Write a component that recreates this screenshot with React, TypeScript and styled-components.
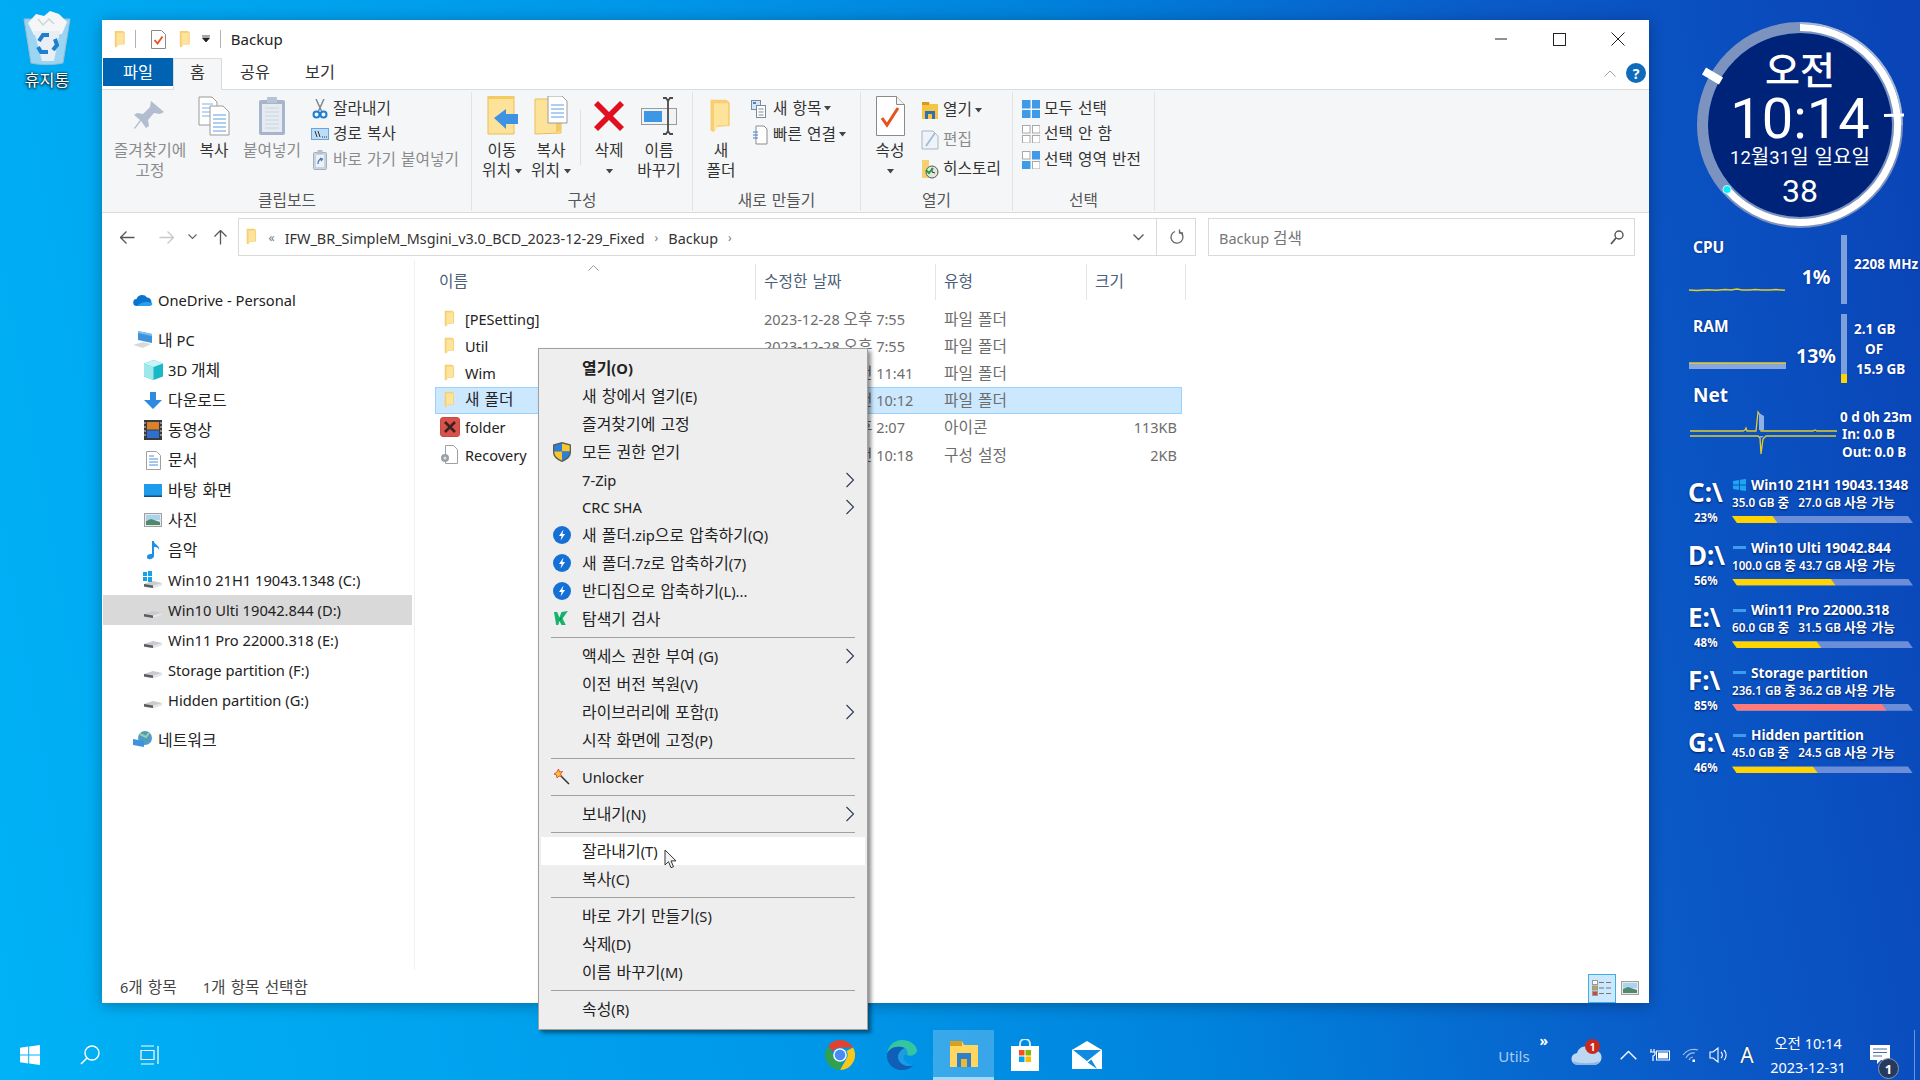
import React from "react";
import styled, { createGlobalStyle } from "styled-components";

const UI = `"Noto Sans", "Noto Sans CJK KR", sans-serif`;

const Global = createGlobalStyle`
  html, body { margin: 0; padding: 0; width: 1920px; height: 1080px; overflow: hidden; }
  * { box-sizing: border-box; }
  svg { display: block; flex: none; }
`;

/* Hangul runs are set a little larger than the Latin around them, as in the reference's UI font */
const Ko = styled.span`font-size: 1.085em; word-spacing: 1px; line-height: 1;`;
const T = ({ children }: { children: string }) => (
  <>
    {children.split(/([가-힣]+(?: [가-힣]+)*)/).map((part, i) =>
      i % 2 ? <Ko key={i}>{part}</Ko> : <React.Fragment key={i}>{part}</React.Fragment>
    )}
  </>
);

const Desktop = styled.div`
  position: relative; width: 1920px; height: 1080px; overflow: hidden;
  font-family: ${UI};
  background: linear-gradient(80deg, #00b2f6 0%, #0096e8 40%, #0082dc 58%, #0a5ac8 80%, #0a43b6 100%);
`;

/* ---------- small shared icons ---------- */
const Folder = ({ s = 1 }: { s?: number }) => (
  <svg width={16 * s} height={21 * s} viewBox="0 0 16 21">
    <path d="M2 1h9l2 1.500V16l-8 .5-1 3-2-1z" fill="#f6cf72" />
    <path d="M4 3h8v12.500H6l-1 3-1-.5z" fill="#fde39c" />
  </svg>
);
const Arrowhead = () => <svg width="7" height="5" viewBox="0 0 7 5"><path d="M0 0h7L3.500 4.500z" fill="#444" /></svg>;
const DriveGlyph = ({ win }: { win?: boolean }) => (
  <svg width="20" height="20" viewBox="0 0 20 20">
    <path d="M1 14l9-3 9 2v2l-9 3-9-1z" fill="#c9cbce" />
    <path d="M1 14l9 1.500V18l-9-1.500z" fill="#5a5c60" />
    <path d="M10 15.500l9-2.500v2l-9 3z" fill="#e4e5e6" />
    {win && <g fill="#12a3ea"><rect x="0" y="2" width="4" height="4" /><rect x="5" y="1" width="4" height="5" /><rect x="0" y="7" width="4" height="4" /><rect x="5" y="7" width="4" height="5" /></g>}
  </svg>
);
const Chev = () => <svg width="10" height="16" viewBox="0 0 10 16"><path d="M1.500 1l7 7-7 7" fill="none" stroke="#2b3a55" strokeWidth="1.100" /></svg>;
const BandiIcon = () => (
  <svg width="18" height="18" viewBox="0 0 18 18"><circle cx="9" cy="9" r="9" fill="#1570d6" /><path d="M10.500 3.500L6 10h2.600l-1 4.500L12 8H9.400z" fill="#fff" /></svg>
);
const ShieldIcon = () => (
  <svg width="18" height="20" viewBox="0 0 18 20">
    <path d="M9 0l9 2.500V10c0 5-4 8-9 10-5-2-9-5-9-10V2.500z" fill="#5c5c50" />
    <path d="M9 1.500v8H1.300V3.500z" fill="#2a7fd8" /><path d="M9 1.500l7.700 2v6H9z" fill="#f8c62e" />
    <path d="M1.300 9.500H9v9c-4-1.800-7.700-4.300-7.700-9z" fill="#f8c62e" /><path d="M9 9.500h7.700c0 4.700-3.700 7.200-7.700 9z" fill="#2a7fd8" />
  </svg>
);
const KasperskyIcon = () => (
  <svg width="15" height="15" viewBox="0 0 14 14"><path d="M0 1h3l2 5 2-5 6-1-5 7 3 6H7L5 9l-1 4H2z" fill="#13b56c" /><path d="M5 9l2-3" stroke="#0a6b40" strokeWidth=".8" /></svg>
);
const WandIcon = () => (
  <svg width="16" height="16" viewBox="0 0 16 16">
    <path d="M6 6l9 9" stroke="#333" strokeWidth="1.500" />
    <path d="M4.500 0l1 3 3-.5-2 2.500 1.500 2.500L5 7 3 9l-.5-3L0 5l2.500-1.500z" fill="#f4c430" stroke="#d8352a" strokeWidth=".8" />
  </svg>
);
const PointerIcon = () => (
  <svg width="14" height="20" viewBox="0 0 14 20"><path d="M1 1v15l3.500-3.300 2.500 6 2.500-1-2.500-5.800h5z" fill="#f2f2f2" stroke="#333" strokeWidth="1" /></svg>
);

/* ---------- desktop icon ---------- */
const BinWrap = styled.div`
  position: absolute; left: 12px; top: 9px; width: 70px;
  display: flex; flex-direction: column; align-items: center; gap: 5px;
`;
const BinLabel = styled.span`
  color: #fff; font-size: 15px; line-height: 20px; text-shadow: 0 1px 3px #000, 0 0 2px #000;
`;
const RecycleBin = () => (
  <svg width="50" height="56" viewBox="0 0 50 56">
    <path d="M2 10l7 44c8 2 24 2 32 0l7-44z" fill="#cfe3f2" fillOpacity=".75" stroke="#9fb9cc" />
    <path d="M6 14l8-9 8 2 6-5 9 3 8 8-5 12-28 1z" fill="#f4f6f8" />
    <path d="M12 22l8 30h12l6-30z" fill="#e8eef3" />
    <path d="M16 10l5 6 6-6 5 5" fill="none" stroke="#cdd4da" strokeWidth="1.500" />
    <g fill="none" stroke="#1d7fd0" strokeWidth="4">
      <path d="M17 32l4-6h6" /><path d="M33 30l2 6-4 5" /><path d="M26 43h-7l-3-5" />
    </g>
  </svg>
);

/* ---------- window ---------- */
const Win = styled.div`
  position: absolute; left: 102px; top: 20px; width: 1547px; height: 983px;
  background: #fff; display: flex; flex-direction: column;
  box-shadow: 0 2px 14px rgba(0, 0, 0, .3); color: #1e1e1e; font-size: 15px;
`;
const TitleBar = styled.div`
  height: 38px; display: flex; align-items: center; padding-left: 11px; flex: none;
`;
const TitleSep = styled.div<{ $m?: number }>`
  width: 1px; height: 18px; background: #b4b4b4; margin: 0 ${p => p.$m ?? 8}px;
`;
const TitleGap = styled.div<{ $w: number }>`width: ${p => p.$w}px; flex: none;`;
const TitleText = styled.span`font-size: 15px; color: #222;`;
const WinButtons = styled.div`margin-left: auto; display: flex; align-items: center; padding-right: 2px;`;
const WinBtn = styled.div`width: 58.5px; display: flex; justify-content: center;`;

const TabRow = styled.div`
  height: 32px; flex: none; display: flex; align-items: flex-start; padding-left: 1px;
  border-bottom: 1px solid #dadbdc; position: relative;
`;
const FileTab = styled.div`
  width: 70px; background: #0063b1; color: #fff; display: flex; align-items: center; justify-content: center;
  font-size: 15px; height: 28px;
`;
const Tab = styled.div<{ $active?: boolean; $w: number }>`
  width: ${p => p.$w}px; height: 28px; display: flex; align-items: center; justify-content: center; font-size: 15px; color: #333;
  ${p => p.$active ? `background:#f5f6f7;border:1px solid #dadbdc;border-bottom:none;height:32px;padding-bottom:4px;` : ""}
`;
const RibbonHelp = styled.div`margin-left: auto; display: flex; align-items: center; gap: 10px; padding-right: 3px; height: 30px;`;
const HelpDot = styled.div`
  width: 20px; height: 20px; border-radius: 50%; background: #0f6cbd; color: #fff; font-size: 14px; font-weight: 700;
  display: flex; align-items: center; justify-content: center;
`;

const Ribbon = styled.div`
  height: 123px; flex: none; background: #f5f6f7; border-bottom: 1px solid #dadbdc; display: flex; padding-left: 1px;
`;
const Group = styled.div<{ $w: number }>`
  width: ${p => p.$w}px; height: 119px; margin-top: 2px; border-right: 1px solid #e2e3e4; display: flex; flex-direction: column; flex: none;
`;
const GroupBody = styled.div<{ $pl: number }>`
  flex: 1; display: flex; padding-left: ${p => p.$pl}px; align-items: flex-start; min-height: 0;
`;
const GroupLabel = styled.div`
  height: 20px; margin-bottom: 1px; line-height: 20px; text-align: center; font-size: 14.500px; color: #555; flex: none;
`;
const LargeBtn = styled.div<{ $w: number; $dim?: boolean }>`
  width: ${p => p.$w}px; flex: none; display: flex; flex-direction: column; align-items: center;
  color: ${p => p.$dim ? "#8b8b8b" : "#333"}; font-size: 14.500px; line-height: 20px; padding-top: 4px;
`;
const LargeIcon = styled.div`height: 40px; display: flex; align-items: center; justify-content: center; margin-bottom: 5px;`;
const Line = styled.div`display: flex; align-items: center; gap: 4px; height: 20px; white-space: nowrap;`;
const VSep = styled.div`width: 1px; height: 55px; background: #dfe0e1; margin: 18px 5px 0;`;
const SmallCol = styled.div<{ $ml: number; $gap: number; $pt: number }>`
  margin-left: ${p => p.$ml}px; display: flex; flex-direction: column; gap: ${p => p.$gap}px; padding-top: ${p => p.$pt}px;
`;
const SmallBtn = styled.div<{ $dim?: boolean }>`
  display: flex; align-items: center; gap: 3px; height: 20px; font-size: 14.500px; white-space: nowrap;
  color: ${p => p.$dim ? "#8b8b8b" : "#333"};
`;
const SmallIco = styled.div`width: 20px; height: 20px; display: flex; align-items: center; justify-content: center; flex: none;`;

const AddressRow = styled.div`
  height: 47px; flex: none; display: flex; align-items: center; padding-top: 1px;
`;
const NavBtns = styled.div`width: 136px; display: flex; align-items: center; flex: none; padding-left: 18px;`;
const NavBtn = styled.div<{ $w: number }>`width: ${p => p.$w}px; display: flex; justify-content: flex-start;`;
const AddressBox = styled.div`
  width: 958px; height: 38px; border: 1px solid #d9d9d9; display: flex; align-items: center; padding-left: 6px; font-size: 14.400px; color: #333; flex: none;
`;
const Crumb = styled.span`margin: 2px 0 0 10px; white-space: nowrap;`;
const CrumbSep = styled.span`color: #777; font-size: 12px; margin-left: 10px;`;
const AddrRight = styled.div`margin-left: auto; display: flex; align-items: center; height: 100%;`;
const ComboArrow = styled.div`margin-right: 12px;`;
const RefreshBox = styled.div`
  width: 39px; height: 100%; border-left: 1px solid #d9d9d9; display: flex; align-items: center; justify-content: center;
`;
const SearchBox = styled.div`
  margin-left: 12px; width: 427px; height: 38px; border: 1px solid #d9d9d9; display: flex; align-items: center; justify-content: space-between;
  padding: 0 10px; font-size: 14.500px; color: #777;
`;
const SearchText = styled.span`margin-top: 1px;`;

const Main = styled.div`flex: 1; min-height: 0; display: flex;`;
const NavPane = styled.div`
  width: 313px; flex: none; padding: 25px 0 0 1px; border-right: 1px solid #f0f0f0;
`;
const NavRow = styled.div<{ $sub?: boolean; $sel?: boolean; $mt?: number }>`
  height: 30px; width: 309px; display: flex; align-items: center; gap: 5px; white-space: nowrap;
  padding-left: ${p => p.$sub ? 40 : 30}px; margin-top: ${p => p.$mt ?? 0}px;
  background: ${p => p.$sel ? "#d9d9d9" : "transparent"}; font-size: 14.700px; color: #222;
`;
const NavText = styled.span`display: block;`;
const FileArea = styled.div`flex: 1; min-width: 0; display: flex; flex-direction: column;`;
const HeaderRow = styled.div`
  display: grid; grid-template-columns: 341px 180px 151px 99px; height: 45px; flex: none;
`;
const HeaderCell = styled.div<{ $pl?: number }>`
  position: relative; border-right: 1px solid #e5e5e5; height: 36px; display: flex; align-items: center; margin-top: 4px; padding-top: 1px; padding-bottom: 1px;
  padding-left: ${p => p.$pl ?? 8}px; font-size: 14.500px; color: #4c607a;
`;
const SortCaret = styled.div`position: absolute; left: 173px; top: 1px;`;
const Rows = styled.div`display: flex; flex-direction: column; padding-left: 20px;`;
const FileRow = styled.div<{ $sel?: boolean }>`
  width: 747px; height: 27.200px; display: grid; grid-template-columns: 321px 180px 151px 95px; align-items: center;
  font-size: 14.500px; color: #6d6d6d;
  ${p => p.$sel ? "background:#cce8ff;box-shadow:inset 0 0 0 1px #99d1ff;" : ""}
`;
const NameCell = styled.div`display: flex; align-items: center; color: #222; padding-left: 8px; white-space: nowrap;`;
const NameIco = styled.div<{ $wide?: boolean }>`
  width: 22px; display: flex; justify-content: flex-start; flex: none;
  margin-left: ${p => p.$wide ? -3 : 0}px; margin-right: ${p => p.$wide ? 3 : 0}px;
`;
const Cell = styled.div<{ $right?: boolean }>`
  padding: 0 ${p => p.$right ? "5px" : "0"} 0 8px; text-align: ${p => p.$right ? "right" : "left"}; white-space: nowrap;
`;
const StatusBar = styled.div`
  height: 33px; flex: none; display: flex; align-items: center; padding-left: 18px; font-size: 14.500px; color: #444;
`;
const StatusGap = styled.span`margin-left: 26px;`;
const ViewBtns = styled.div`margin-left: auto; display: flex; align-items: center; padding-right: 5px;`;
const ViewBtn = styled.div<{ $on?: boolean }>`
  width: 28px; height: 29px; display: flex; align-items: center; justify-content: center; margin-top: 3px;
  ${p => p.$on ? "background:#cce8ff;border:1px solid #3daee9;" : ""}
`;

/* ---------- context menu ---------- */
const Menu = styled.div`
  position: absolute; left: 538px; top: 348px; width: 330px; height: 682px; background: #eeeeee;
  border: 1px solid #a0a0a0; padding: 5px 2px 6px; box-shadow: 3px 3px 4px rgba(0, 0, 0, .45);
  font-size: 14.700px; color: #222;
`;
const MenuItem = styled.div<{ $hot?: boolean; $bold?: boolean }>`
  height: 27.900px; display: flex; align-items: center; white-space: nowrap; padding-right: 10px; position: relative;
  background: ${p => p.$hot ? "#fff" : "transparent"}; font-weight: ${p => p.$bold ? 700 : 400};
`;
const MenuIcon = styled.div`width: 41px; display: flex; justify-content: center; flex: none;`;
const MenuLabel = styled.span`display: block;`;
const MenuArrow = styled.div`margin-left: auto;`;
const MenuSep = styled.div`height: 9.300px; display: flex; align-items: center; padding: 0 10px;
  &::after { content: ""; flex: 1; height: 1px; background: #a0a0a0; }
`;
const Pointer = styled.div`position: absolute; left: 664px; top: 849px;`;

/* ---------- taskbar ---------- */
const Taskbar = styled.div`
  position: absolute; left: 0; right: 0; bottom: 0; height: 50px; display: flex; align-items: stretch; color: #fff;
`;
const TaskCell = styled.div<{ $w: number; $ml?: number; $on?: boolean }>`
  width: ${p => p.$w}px; margin-left: ${p => p.$ml ?? 0}px; display: flex; align-items: center; justify-content: center; flex: none; position: relative;
  ${p => p.$on ? `background: rgba(255,255,255,.22); border-bottom: 3px solid rgba(255,255,255,.55);` : ""}
`;
const Tray = styled.div`margin-left: auto; display: flex; align-items: stretch;`;
const TrayCell = styled.div<{ $w: number; $pr?: number }>`
  width: ${p => p.$w}px; flex: none; display: flex; align-items: center; justify-content: center; position: relative;
  padding-right: ${p => p.$pr ?? 0}px;
`;
const UtilsText = styled.span`font-size: 15px; color: #a8cdf0; margin-top: 2px;`;
const More = styled.span`position: absolute; right: 13px; top: 1px; font-size: 14px; font-weight: 700;`;
const CloudBadge = styled.div`
  position: absolute; left: 24px; top: 9px; width: 15px; height: 15px; border-radius: 50%; background: #c8281e; color: #fff;
  font-size: 10px; font-weight: 700; display: flex; align-items: center; justify-content: center;
`;
const ImeA = styled.span`font-size: 21px; color: #fff; text-shadow: 0 0 1px #000;`;
const Clock = styled.div`
  display: flex; flex-direction: column; align-items: center; font-size: 14.500px; line-height: 24px; color: #fff; white-space: nowrap;
`;
const NotifBadge = styled.div`
  position: absolute; left: 23px; top: 28px; width: 21px; height: 21px; border-radius: 50%; background: #263a5e; border: 1px solid #8b9ab4;
  color: #fff; font-size: 13px; font-weight: 700; display: flex; align-items: center; justify-content: center;
`;
const TrayEdge = styled.div`width: 1px; background: rgba(255,255,255,.4); margin: 0 5px 0 0;`;

/* ---------- clock widget ---------- */
const ClockFace = styled.div`
  position: absolute; left: 1692px; top: 17px; width: 216px; height: 216px; color: #fff;
  display: flex; flex-direction: column; align-items: center;
`;
const ClockRing = styled.svg`position: absolute; inset: 0;`;
const ClockText = styled.div<{ $size: number; $h: number; $w?: number; $mt?: number }>`
  position: relative; font-family: Roboto, "Noto Sans CJK KR", sans-serif; font-size: ${p => p.$size}px; font-weight: ${p => p.$w ?? 400};
  line-height: ${p => p.$h}px; height: ${p => p.$h}px; margin-top: ${p => p.$mt ?? 0}px; white-space: nowrap;
`;

/* ---------- meters ---------- */
const Meters = styled.div`
  position: absolute; left: 1689px; top: 235px; width: 231px; color: #fff; display: flex; flex-direction: column;
  font-family: ${UI}; text-shadow: 0 0 2px rgba(0, 30, 110, .8);
`;
const MeterRow = styled.div<{ $mt?: number }>`
  height: 69px; display: flex; margin-top: ${p => p.$mt ?? 0}px;
`;
const MeterLeft = styled.div`width: 108px; flex: none; position: relative; display: flex; flex-direction: column; justify-content: space-between; padding-bottom: 9px;`;
const MeterName = styled.div`font-size: 15.500px; font-weight: 700; padding-left: 4px; line-height: 24px;`;
const MeterPct = styled.div`width: 44px; flex: none; text-align: center; padding: 13px 6px 0 0; font-size: 19.500px; font-weight: 700; display: flex; align-items: center; justify-content: center; white-space: nowrap;`;
const MeterBar = styled.div`width: 6px; flex: none; background: #7d9fdc; position: relative; display: flex; align-items: flex-end;`;
const MeterBarFill = styled.div`width: 100%; background: #ffd400;`;
const MeterInfo = styled.div`margin-left: 7px; font-size: 13.500px; font-weight: 700; display: flex; flex-direction: column; justify-content: center; white-space: nowrap;`;
const MeterLine = styled.div<{ $pl?: number; $h?: number }>`padding-left: ${p => p.$pl ?? 0}px; line-height: ${p => p.$h ?? 20}px; min-height: ${p => p.$h ?? 20}px;`;
const NetName = styled.div`font-size: 19px; font-weight: 700; line-height: 26px; padding-left: 4px; margin-top: -1px;`;
const NetBody = styled.div`display: flex;`;
const NetInfo = styled.div`margin-left: 2px; font-size: 13.500px; font-weight: 700; display: flex; flex-direction: column; white-space: nowrap;`;

const Drives = styled.div`
  position: absolute; left: 1688px; top: 477px; width: 226px; color: #fff; display: flex; flex-direction: column;
  text-shadow: 0 1px 2px rgba(0, 20, 80, .9);
`;
const Drive = styled.div`height: 62.600px; display: grid; grid-template-columns: 44px 181px; align-items: start;`;
const DriveLetterCol = styled.div`display: flex; flex-direction: column; align-items: flex-start;`;
const DriveLetter = styled.div`font-size: 26px; font-weight: 700; line-height: 30px; white-space: nowrap;`;
const DrivePct = styled.div`font-size: 11.500px; font-weight: 700; line-height: 16px; margin: 3px 0 0 6px;`;
const DriveTitle = styled.div`display: flex; align-items: center; height: 14px; margin-top: 1px; font-size: 13.700px; font-weight: 700; white-space: nowrap; line-height: 14px;`;
const DriveGlyphSlot = styled.div`width: 19px; flex: none; display: flex; align-items: center; padding-left: 1px;`;
const Dash = styled.div`width: 13px; height: 3px; background: #3d9cf0;`;
const DriveSub = styled.div`font-size: 11.700px; font-weight: 600; line-height: 18px; margin-top: 1px; white-space: pre;`;
const Track = styled.div`
  height: 7px; margin-top: 5px; position: relative; background: #6c8ed8; clip-path: polygon(0 0, calc(100% - 5px) 0, 100% 100%, 5px 100%);
`;
const Fill = styled.div<{ $c: string }>`
  position: absolute; left: 0; top: 0; bottom: 0; background: ${p => p.$c}; clip-path: polygon(0 0, calc(100% - 5px) 0, 100% 100%, 0 100%);
`;

/* ---------- ribbon icons ---------- */
const PinIco = () => (
  <svg width="32" height="34" viewBox="0 0 32 34"><path d="M17 2l13 11-4 2-6-1-6 7 1 6-3 2-5-7-6 8-1-1 6-8-6-5 3-2 6 1 7-7z" fill="#b2bed0" /></svg>
);
const PagesIco = () => (
  <svg width="32" height="40" viewBox="0 0 32 40">
    <path d="M1 1h13l5 5v23H1z" fill="#fff" stroke="#9a9a9a" />
    <path d="M4 8h11M4 12h11M4 16h11M4 20h11" stroke="#7fb2e5" />
    <path d="M12 10h13l6 6v23H12z" fill="#fff" stroke="#9a9a9a" />
    <path d="M15 19h13M15 23h13M15 27h13M15 31h13M15 35h13" stroke="#5b9fe4" strokeWidth="1.200" />
  </svg>
);
const ClipIco = () => (
  <svg width="28" height="40" viewBox="0 0 28 40">
    <rect x="1" y="4" width="26" height="35" rx="2" fill="#a6b5cc" /><rect x="4" y="8" width="20" height="28" fill="#e6ebf2" />
    <path d="M7 12h14M7 16h14M7 20h14M7 24h14M7 28h14M7 32h14" stroke="#cbd4e0" />
    <rect x="9" y="1" width="10" height="6" rx="1" fill="#b7c3d6" />
  </svg>
);
const ScissorsIco = () => (
  <svg width="16" height="20" viewBox="0 0 16 20">
    <path d="M4 0l5.500 12M12 0L6.500 12" stroke="#7d8792" strokeWidth="1.500" />
    <circle cx="4.500" cy="15.500" r="3" fill="none" stroke="#1e7fd2" strokeWidth="2" /><circle cx="11.500" cy="15.500" r="3" fill="none" stroke="#1e7fd2" strokeWidth="2" />
  </svg>
);
const PathIco = () => (
  <svg width="18" height="14" viewBox="0 0 18 14"><rect x=".5" y="1.500" width="17" height="11" fill="#bcdcf7" stroke="#6aa5dc" /><path d="M4 4l2 6M7 4l2 6" stroke="#333" /><path d="M11 10h1M13 10h1M15 10h1" stroke="#333" /></svg>
);
const ShortcutIco = () => (
  <svg width="14" height="20" viewBox="0 0 14 20"><rect x=".5" y="2.500" width="13" height="17" rx="1" fill="#c9d3e0" stroke="#a3afbf" /><rect x="3" y="5" width="8" height="12" fill="#eef1f5" /><path d="M5 14c0-3 1-5 4-5M7 8l2.500 1L8 11" fill="none" stroke="#4a7fb8" strokeWidth="1.300" /><rect x="4.500" y="0" width="5" height="4" fill="#b3bfcf" /></svg>
);
const MoveToIco = () => (
  <svg width="36" height="40" viewBox="0 0 36 40">
    <path d="M4 0h26v38H4z" fill="#fde39a" stroke="#e8bf57" />
    <path d="M4 0h26v3H4z" fill="#f4ca63" />
    <path d="M10 22l12-9v5h12v10H22v5z" fill="#3e92e4" />
  </svg>
);
const CopyToIco = () => (
  <svg width="34" height="40" viewBox="0 0 34 40">
    <path d="M1 3h26v34l-26 1z" fill="#fde39a" stroke="#e8bf57" />
    <path d="M22 14v22c2 1 4-1 5-3V12z" fill="#f4ca63" />
    <path d="M14 0h14l5 5v22H14z" fill="#fff" stroke="#9a9a9a" /><path d="M17 9h13M17 13h13M17 17h13M17 21h13" stroke="#5b9fe4" />
  </svg>
);
const DelIco = () => (
  <svg width="32" height="32" viewBox="0 0 32 32"><path d="M5 1l11 11L27 1l4 4-11 11 11 11-4 4-11-11L5 31l-4-4 11-11L1 5z" fill="#e01020" /></svg>
);
const RenameIco = () => (
  <svg width="36" height="38" viewBox="0 0 36 38">
    <rect x=".5" y="11.500" width="35" height="16" fill="#f0f2f4" stroke="#9a9a9a" /><rect x="3" y="14" width="18" height="11" fill="#3c98e6" />
    <path d="M22 1h3l2 3 2-3h3M27 4v30M22 37h3l2-3 2 3h3" fill="none" stroke="#4a4a4a" strokeWidth="1.800" />
  </svg>
);
const NewItemIco = () => (
  <svg width="18" height="18" viewBox="0 0 18 18"><rect x=".5" y=".5" width="9" height="9" fill="#d7e6f5" stroke="#7a8a99" /><path d="M2 3h3" stroke="#3a8ad8" strokeWidth="2" /><rect x="5.500" y="5.500" width="9" height="12" fill="#fff" stroke="#7a8a99" /><path d="M7.500 9h5M7.500 12h5M7.500 15h5" stroke="#7a8a99" /></svg>
);
const EasyIco = () => (
  <svg width="16" height="20" viewBox="0 0 16 20"><path d="M4 1h8l3 3v15H4z" fill="#fff" stroke="#8b8b8b" /><path d="M1 7h5M1 10h5M1 13h5" stroke="#3a7ed0" strokeWidth="1.200" /></svg>
);
const PropIco = () => (
  <svg width="29" height="40" viewBox="0 0 29 40"><path d="M.5 .5h20l8 8v31H.5z" fill="#fff" stroke="#8a8a8a" /><path d="M20.500 .5v8h8" fill="#f2f2f2" stroke="#8a8a8a" /><path d="M6 22l5 7L22 12" fill="none" stroke="#e8501c" strokeWidth="3" /></svg>
);
const OpenIco = () => (
  <svg width="18" height="20" viewBox="0 0 18 20"><path d="M1 2h7l1 2h8v15H1z" fill="#f6c640" /><path d="M1 2h7v3H1z" fill="#d69a20" /><path d="M4 11h10v8h-3v-5H7v5H4z" fill="#2f6fb5" /></svg>
);
const EditIco = () => (
  <svg width="18" height="20" viewBox="0 0 18 20"><path d="M1 1h11l5 5v13H1z" fill="#eef3f9" stroke="#a9b6c6" /><path d="M5 16L14 3" stroke="#a9bdd6" strokeWidth="2" /></svg>
);
const HistIco = () => (
  <svg width="18" height="20" viewBox="0 0 18 20"><path d="M1 1h7v18H1z" fill="#f6cf72" /><circle cx="11" cy="13" r="6" fill="#dfe7df" stroke="#555" /><path d="M11 9v4l3 1" fill="none" stroke="#333" /><path d="M5 11l3 3 4-5" fill="none" stroke="#21a03a" strokeWidth="2" /></svg>
);
const GridIco = ({ fill }: { fill: boolean[] }) => (
  <svg width="18" height="18" viewBox="0 0 18 18">
    {[[0, 0], [10, 0], [0, 10], [10, 10]].map(([x, y], i) => (
      <rect key={i} x={x + .5} y={y + .5} width="7.500" height="7.500" fill={fill[i] ? "#3f9be8" : "#fff"} stroke={fill[i] ? "#3f9be8" : "#a9a9a9"} />
    ))}
  </svg>
);

/* ---------- nav icons ---------- */
const PicIco = () => <svg width="18" height="14" viewBox="0 0 18 14"><rect x=".5" y=".5" width="17" height="13" fill="#e8e8e8" stroke="#a0a0a0" /><rect x="2" y="2" width="14" height="5" fill="#a9d3ee" /><path d="M2 8l5-2 9 3v3H2z" fill="#4f8a70" /></svg>;
const Nav = {
  cloud: <svg width="20" height="14" viewBox="0 0 20 14"><path d="M4 13a3.500 3.500 0 0 1-.5-7A6 6 0 0 1 14 4.500 4.500 4.500 0 0 1 16 13z" fill="#0a74d0" /><path d="M4 13c4-4 9-5 15-3 1 2-1 3-3 3z" fill="#29a0ec" /></svg>,
  pc: <svg width="20" height="18" viewBox="0 0 20 18"><path d="M5 0l14 3v9L5 9z" fill="#3f93dd" /><path d="M5 0l14 3v2L5 2z" fill="#7cc0f0" /><path d="M0 14l10-3 8 2-8 4z" fill="#d8d9da" /></svg>,
  cube: <svg width="19" height="20" viewBox="0 0 19 20"><path d="M9.500 0L19 3.500v13L9.500 20 0 16.500v-13z" fill="#19b8c8" /><path d="M0 3.500L9.500 7v13L0 16.500z" fill="#9ee8ec" /><path d="M9.500 0L19 3.500 9.500 7 0 3.500z" fill="#c8f4f4" /></svg>,
  down: <svg width="18" height="17" viewBox="0 0 18 17"><path d="M6 0h6v8h6l-9 9-9-9h6z" fill="#2f8be0" /></svg>,
  video: <svg width="18" height="20" viewBox="0 0 18 20"><rect width="18" height="20" fill="#3a3a3a" /><rect x="3" y="2" width="12" height="7.500" fill="#d9812c" /><rect x="3" y="10.500" width="12" height="7.500" fill="#2f6fd0" /><path d="M1 2v16M17 2v16" stroke="#ddd" strokeDasharray="2 2" /></svg>,
  doc: <svg width="15" height="19" viewBox="0 0 15 19"><path d="M.5 .5h10l4 4v14H.5z" fill="#fff" stroke="#a0a0a0" /><path d="M3 5h5M3 8h9M3 11h9M3 14h9" stroke="#4a93dc" /></svg>,
  desk: <svg width="18" height="13" viewBox="0 0 18 13"><rect width="18" height="13" fill="#1f9bec" /><rect y="11.500" width="18" height="1.500" fill="#134e86" /></svg>,
  pic: <PicIco />,
  music: <svg width="13" height="19" viewBox="0 0 13 19"><path d="M5 0h2c0 4 6 4 5 9-1-3-3-3-5-3v9c0 3-7 5-7 1 0-3 3-3 5-3z" fill="#1f8fe6" /></svg>,
  net: <svg width="20" height="18" viewBox="0 0 20 18"><circle cx="12" cy="7" r="7" fill="#4f9cc8" /><path d="M7 3l6 3 3-4" stroke="#9fd28a" fill="none" strokeWidth="2" /><path d="M0 8l11 2v6L0 14z" fill="#3f93dd" /></svg>,
};
const ErrIco = () => <svg width="20" height="20" viewBox="0 0 20 20"><rect x=".5" y=".5" width="19" height="19" rx="2.500" fill="#d9514a" stroke="#c84a42" /><path d="M5 5l10 10M15 5L5 15" stroke="#3a2220" strokeWidth="2.600" /></svg>;
const IniIco = () => <svg width="18" height="19" viewBox="0 0 18 19"><path d="M5.500 .5h8l4 4v14h-12z" fill="#fff" stroke="#a0a0a0" /><circle cx="5" cy="13" r="4" fill="#9ba0a5" /><circle cx="5" cy="13" r="1.500" fill="#e0e0e0" /></svg>;

/* ---------- taskbar icons ---------- */
const ChromeIco = () => (
  <svg width="30" height="30" viewBox="0 0 30 30">
    <path d="M15 0a15 15 0 0 1 13 7.500H15a7.500 7.500 0 0 0-6.800 4.300L3.200 6A15 15 0 0 1 15 0z" fill="#e3402f" />
    <path d="M28 7.500A15 15 0 0 1 15 30l6.500-11.200A7.500 7.500 0 0 0 21.500 11z" fill="#f9c818" />
    <path d="M15 30A15 15 0 0 1 3.200 6l6.300 11a7.500 7.500 0 0 0 8 3.800z" fill="#2fa14f" />
    <circle cx="15" cy="15" r="6.800" fill="#fff" /><circle cx="15" cy="15" r="5.400" fill="#4a8af4" />
  </svg>
);
const EdgeIco = () => (
  <svg width="30" height="30" viewBox="0 0 30 30">
    <path d="M15 0C7 0 1 6 0 14c3-6 9-8 14-7 5 1 7 4 6 8 5 2 10-1 10-5C29 4 22 0 15 0z" fill="#34c6a0" />
    <path d="M0 14c-1 9 6 16 15 16 5 0 9-2 12-5-5 2-12 1-15-4-3-5 0-10 6-13C10 5 2 8 0 14z" fill="#0f5fb8" />
    <path d="M18 8c-5 2-8 7-6 12 2 5 9 7 15 5-3 0-7-1-9-4-2-3-2-7 2-6 1-3 0-6-2-7z" fill="#1d9de0" />
  </svg>
);
const ExplorerIco = () => (
  <svg width="28" height="26" viewBox="0 0 28 26"><path d="M0 0h12l2 4h14v22H0z" fill="#ffd660" /><path d="M0 0h12v5H0z" fill="#d9a020" /><path d="M7 12h14v14h-4v-8h-6v8H7z" fill="#2f80c8" /><rect x="11" y="18" width="6" height="8" fill="#e9b93a" /></svg>
);
const StoreIco = () => (
  <svg width="28" height="32" viewBox="0 0 28 32"><path d="M9 7V5a5 5 0 0 1 10 0v2" fill="none" stroke="#cfe8fa" strokeWidth="2" /><rect y="7" width="28" height="25" fill="#fff" /><rect x="8" y="11" width="5.500" height="5.500" fill="#f25022" /><rect x="14.500" y="11" width="5.500" height="5.500" fill="#7fba00" /><rect x="8" y="17.500" width="5.500" height="5.500" fill="#00a4ef" /><rect x="14.500" y="17.500" width="5.500" height="5.500" fill="#ffb900" /></svg>
);
const MailIco = () => (
  <svg width="30" height="28" viewBox="0 0 30 28"><path d="M15 0l15 9v19H0V9z" fill="#fff" /><path d="M0 9h30L19 18l6 10-10-7-15-12z" fill="#0f8be4" /><path d="M0 9l15 12 15-12" fill="none" stroke="#fff" strokeWidth="1.500" /></svg>
);

const menuGroups: { t: string; icon?: React.ReactNode; arrow?: boolean; bold?: boolean; hot?: boolean }[][] = [
  [
    { t: "열기(O)", bold: true }, { t: "새 창에서 열기(E)" }, { t: "즐겨찾기에 고정" },
    { t: "모든 권한 얻기", icon: <ShieldIcon /> }, { t: "7-Zip", arrow: true }, { t: "CRC SHA", arrow: true },
    { t: "새 폴더.zip으로 압축하기(Q)", icon: <BandiIcon /> }, { t: "새 폴더.7z로 압축하기(7)", icon: <BandiIcon /> },
    { t: "반디집으로 압축하기(L)...", icon: <BandiIcon /> }, { t: "탐색기 검사", icon: <KasperskyIcon /> },
  ],
  [{ t: "액세스 권한 부여 (G)", arrow: true }, { t: "이전 버전 복원(V)" }, { t: "라이브러리에 포함(I)", arrow: true }, { t: "시작 화면에 고정(P)" }],
  [{ t: "Unlocker", icon: <WandIcon /> }],
  [{ t: "보내기(N)", arrow: true }],
  [{ t: "잘라내기(T)", hot: true }, { t: "복사(C)" }],
  [{ t: "바로 가기 만들기(S)" }, { t: "삭제(D)" }, { t: "이름 바꾸기(M)" }],
  [{ t: "속성(R)" }],
];

const navItems: { t: string; i: React.ReactNode; sub?: boolean; sel?: boolean; mt?: number }[] = [
  { t: "OneDrive - Personal", i: Nav.cloud },
  { t: "내 PC", i: Nav.pc, mt: 10 },
  { t: "3D 개체", i: Nav.cube, sub: true },
  { t: "다운로드", i: Nav.down, sub: true },
  { t: "동영상", i: Nav.video, sub: true },
  { t: "문서", i: Nav.doc, sub: true },
  { t: "바탕 화면", i: Nav.desk, sub: true },
  { t: "사진", i: Nav.pic, sub: true },
  { t: "음악", i: Nav.music, sub: true },
  { t: "Win10 21H1 19043.1348 (C:)", i: <DriveGlyph win />, sub: true },
  { t: "Win10 Ulti 19042.844 (D:)", i: <DriveGlyph />, sub: true, sel: true },
  { t: "Win11 Pro 22000.318 (E:)", i: <DriveGlyph />, sub: true },
  { t: "Storage partition (F:)", i: <DriveGlyph />, sub: true },
  { t: "Hidden partition (G:)", i: <DriveGlyph />, sub: true },
  { t: "네트워크", i: Nav.net, mt: 10 },
];
const NavIcoSlot = styled.div`width: 20px; height: 20px; display: flex; align-items: center; justify-content: center; flex: none;`;

const files: { n: string; i: React.ReactNode; wide?: boolean; d: string; ty: string; sz?: string; sel?: boolean }[] = [
  { n: "[PESetting]", i: <Folder s={0.85} />, d: "2023-12-28 오후 7:55", ty: "파일 폴더" },
  { n: "Util", i: <Folder s={0.85} />, d: "2023-12-28 오후 7:55", ty: "파일 폴더" },
  { n: "Wim", i: <Folder s={0.85} />, d: "2023-12-29 오전 11:41", ty: "파일 폴더" },
  { n: "새 폴더", i: <Folder s={0.85} />, d: "2023-12-31 오전 10:12", ty: "파일 폴더", sel: true },
  { n: "folder", i: <ErrIco />, wide: true, d: "2023-12-28 오후 2:07", ty: "아이콘", sz: "113KB" },
  { n: "Recovery", i: <IniIco />, wide: true, d: "2023-12-29 오전 10:18", ty: "구성 설정", sz: "2KB" },
];

const drives = [
  { l: "C:\\", p: 23, t: "Win10 21H1 19043.1348", s: "35.0 GB 중   27.0 GB 사용 가능", win: true },
  { l: "D:\\", p: 56, t: "Win10 Ulti 19042.844", s: "100.0 GB 중 43.7 GB 사용 가능" },
  { l: "E:\\", p: 48, t: "Win11 Pro 22000.318", s: "60.0 GB 중   31.5 GB 사용 가능" },
  { l: "F:\\", p: 85, t: "Storage partition", s: "236.1 GB 중 36.2 GB 사용 가능", c: "#ff7b7b" },
  { l: "G:\\", p: 46, t: "Hidden partition", s: "45.0 GB 중   24.5 GB 사용 가능" },
];

export default function App() {
  return (
    <Desktop>
      <Global />
      <BinWrap><RecycleBin /><BinLabel><T>휴지통</T></BinLabel></BinWrap>

      <ClockFace>
        <ClockRing width="216" height="216" viewBox="0 0 216 216">
          <circle cx="108" cy="108" r="92" fill="#00237a" />
          <circle cx="108" cy="108" r="97.500" fill="none" stroke="#7d93bf" strokeWidth="11" />
          <path d="M108 10.500A97.500 97.500 0 1 1 35 172.500" fill="none" stroke="#fff" strokeWidth="7" />
          <path d="M108 6A102 102 0 0 1 210 108" fill="none" stroke="#a9bbe0" strokeWidth="1.500" />
          <circle cx="35" cy="172.500" r="4" fill="#00f0ff" stroke="#c8f8ff" />
          <path d="M29 64l-17-10" stroke="#fff" strokeWidth="8" />
          <path d="M192 98.500l20-0.500" stroke="#fff" strokeWidth="3" />
        </ClockRing>
        <ClockText $size={38} $h={44} $w={500} $mt={32}>오전</ClockText>
        <ClockText $size={56} $h={56} $w={400} $mt={-2}>10:14</ClockText>
        <ClockText $size={18.500} $h={24} $mt={-1}><T>12월31일 일요일</T></ClockText>
        <ClockText $size={32} $h={38} $mt={2}>38</ClockText>
      </ClockFace>

      <Meters>
        <MeterRow>
          <MeterLeft>
            <MeterName>CPU</MeterName>
            <svg width="96" height="20" viewBox="0 0 96 20"><path d="M0 15l8 .5 10-.8 10 .5 8-.6 6 .5 6-1 5 .8 8 .2 5-.7 7 .6 8 0 6-.4 9 .7" fill="none" stroke="#e6cc28" strokeWidth="1.500" /></svg>
          </MeterLeft>
          <MeterPct>1%</MeterPct>
          <MeterBar />
          <MeterInfo><MeterLine $h={18}>2208 MHz</MeterLine><MeterLine $h={12} /></MeterInfo>
        </MeterRow>
        <MeterRow $mt={10}>
          <MeterLeft>
            <MeterName>RAM</MeterName>
            <svg width="97" height="24" viewBox="0 0 97 24"><rect x="0" y="13" width="97" height="6" fill="#86a6dc" /><path d="M0 13h97" stroke="#e6cc28" strokeWidth="1.500" /></svg>
          </MeterLeft>
          <MeterPct>13%</MeterPct>
          <MeterBar><MeterBarFill style={{ height: "13%" }} /></MeterBar>
          <MeterInfo>
            <MeterLine>2.1 GB</MeterLine><MeterLine $pl={11}>OF</MeterLine><MeterLine $pl={2}>15.9 GB</MeterLine>
          </MeterInfo>
        </MeterRow>
        <NetName>Net</NetName>
        <NetBody>
          <svg width="149" height="50" viewBox="0 0 149 50">
            <path d="M1 23h53l2-1 1-2 1 3h9l2-19 2 3 1 16h52l2-1 2 1h20" fill="none" stroke="#e6cc28" strokeWidth="1.300" />
            <path d="M1 28h68l2 2 1 16 2-15 3-3h70" fill="none" stroke="#e6cc28" strokeWidth="1.300" />
            <path d="M70 5l5 3v14h-5zM72 30l3-2h-5z" fill="#8fb0e4" />
          </svg>
          <NetInfo>
            <MeterLine $h={18}>0 d 0h 23m</MeterLine><MeterLine $pl={2} $h={17}>In: 0.0 B</MeterLine><MeterLine $pl={2} $h={18}>Out: 0.0 B</MeterLine>
          </NetInfo>
        </NetBody>
      </Meters>

      <Drives>
        {drives.map(d => (
          <Drive key={d.l}>
            <DriveLetterCol><DriveLetter>{d.l}</DriveLetter><DrivePct>{d.p}%</DrivePct></DriveLetterCol>
            <div>
              <DriveTitle>
                <DriveGlyphSlot>
                  {d.win ? (
                    <svg width="13" height="12" viewBox="0 0 13 12"><path d="M0 2l6-1v4.500H0zM7 .8L13 0v5.500H7zM0 6.500h6V11l-6-1zM7 6.500h6V12l-6-.8z" fill="#1ea7f0" /></svg>
                  ) : <Dash />}
                </DriveGlyphSlot>
                {d.t}
              </DriveTitle>
              <DriveSub><T>{d.s}</T></DriveSub>
              <Track><Fill $c={d.c ?? "#ffd400"} style={{ width: `calc(5px + ${d.p} * 1.760px)` }} /></Track>
            </div>
          </Drive>
        ))}
      </Drives>

      <Win>
        <TitleBar>
          <Folder s={0.9} />
          <TitleSep $m={8} />
          <TitleGap $w={7} />
          <svg width="15" height="19" viewBox="0 0 15 19"><path d="M.5 .5h10l4 4v14H.5z" fill="#fff" stroke="#8a8a8a" /><path d="M3.500 10l3 3.500 5-7" fill="none" stroke="#e8501c" strokeWidth="1.800" /></svg>
          <TitleGap $w={12} />
          <Folder s={0.9} />
          <TitleGap $w={9} />
          <svg width="8" height="8" viewBox="0 0 8 8"><path d="M0 1h8M.5 3h7L4 7z" stroke="#222" fill="#222" strokeWidth=".8" /></svg>
          <TitleSep $m={10} />
          <TitleText>Backup</TitleText>
          <WinButtons>
            <WinBtn><svg width="12" height="2" viewBox="0 0 12 2"><path d="M0 1h12" stroke="#222" /></svg></WinBtn>
            <WinBtn><svg width="13" height="13" viewBox="0 0 13 13"><rect x=".5" y=".5" width="12" height="12" fill="none" stroke="#222" /></svg></WinBtn>
            <WinBtn><svg width="14" height="14" viewBox="0 0 14 14"><path d="M.5 .5l13 13M13.500 .5l-13 13" stroke="#222" /></svg></WinBtn>
          </WinButtons>
        </TitleBar>

        <TabRow>
          <FileTab><T>파일</T></FileTab>
          <Tab $active $w={49}><T>홈</T></Tab>
          <Tab $w={66}><T>공유</T></Tab>
          <Tab $w={64}><T>보기</T></Tab>
          <RibbonHelp>
            <svg width="12" height="7" viewBox="0 0 12 7"><path d="M.5 6.500L6 1l5.500 5.500" fill="none" stroke="#a0a0a0" /></svg>
            <HelpDot>?</HelpDot>
          </RibbonHelp>
        </TabRow>

        <Ribbon>
          <Group $w={369}>
            <GroupBody $pl={10}>
              <LargeBtn $w={74} $dim><LargeIcon><PinIco /></LargeIcon><Line><T>즐겨찾기에</T></Line><Line><T>고정</T></Line></LargeBtn>
              <LargeBtn $w={54}><LargeIcon><PagesIco /></LargeIcon><Line><T>복사</T></Line></LargeBtn>
              <LargeBtn $w={62} $dim><LargeIcon><ClipIco /></LargeIcon><Line><T>붙여넣기</T></Line></LargeBtn>
              <SmallCol $ml={7} $gap={5.500} $pt={6.500}>
                <SmallBtn><SmallIco><ScissorsIco /></SmallIco><T>잘라내기</T></SmallBtn>
                <SmallBtn><SmallIco><PathIco /></SmallIco><T>경로 복사</T></SmallBtn>
                <SmallBtn $dim><SmallIco><ShortcutIco /></SmallIco><T>바로 가기 붙여넣기</T></SmallBtn>
              </SmallCol>
            </GroupBody>
            <GroupLabel><T>클립보드</T></GroupLabel>
          </Group>
          <Group $w={221}>
            <GroupBody $pl={5}>
              <LargeBtn $w={50}><LargeIcon><MoveToIco /></LargeIcon><Line><T>이동</T></Line><Line><T>위치</T><Arrowhead /></Line></LargeBtn>
              <LargeBtn $w={48}><LargeIcon><CopyToIco /></LargeIcon><Line><T>복사</T></Line><Line><T>위치</T><Arrowhead /></Line></LargeBtn>
              <VSep />
              <LargeBtn $w={46}><LargeIcon><DelIco /></LargeIcon><Line><T>삭제</T></Line><Line><Arrowhead /></Line></LargeBtn>
              <LargeBtn $w={54}><LargeIcon><RenameIco /></LargeIcon><Line><T>이름</T></Line><Line><T>바꾸기</T></Line></LargeBtn>
            </GroupBody>
            <GroupLabel><T>구성</T></GroupLabel>
          </Group>
          <Group $w={168}>
            <GroupBody $pl={4}>
              <LargeBtn $w={48}><LargeIcon><Folder s={1.75} /></LargeIcon><Line><T>새</T></Line><Line><T>폴더</T></Line></LargeBtn>
              <SmallCol $ml={5} $gap={6} $pt={6.500}>
                <SmallBtn><SmallIco><NewItemIco /></SmallIco><T>새 항목</T><Arrowhead /></SmallBtn>
                <SmallBtn><SmallIco><EasyIco /></SmallIco><T>빠른 연결</T><Arrowhead /></SmallBtn>
              </SmallCol>
            </GroupBody>
            <GroupLabel><T>새로 만들기</T></GroupLabel>
          </Group>
          <Group $w={152}>
            <GroupBody $pl={5}>
              <LargeBtn $w={48}><LargeIcon><PropIco /></LargeIcon><Line><T>속성</T></Line><Line><Arrowhead /></Line></LargeBtn>
              <SmallCol $ml={6} $gap={9.500} $pt={8}>
                <SmallBtn><SmallIco><OpenIco /></SmallIco><T>열기</T><Arrowhead /></SmallBtn>
                <SmallBtn $dim><SmallIco><EditIco /></SmallIco><T>편집</T></SmallBtn>
                <SmallBtn><SmallIco><HistIco /></SmallIco><T>히스토리</T></SmallBtn>
              </SmallCol>
            </GroupBody>
            <GroupLabel><T>열기</T></GroupLabel>
          </Group>
          <Group $w={142}>
            <GroupBody $pl={8}>
              <SmallCol $ml={0} $gap={5.500} $pt={6.500}>
                <SmallBtn><SmallIco><GridIco fill={[true, true, true, true]} /></SmallIco><T>모두 선택</T></SmallBtn>
                <SmallBtn><SmallIco><GridIco fill={[false, false, false, false]} /></SmallIco><T>선택 안 함</T></SmallBtn>
                <SmallBtn><SmallIco><GridIco fill={[false, true, true, false]} /></SmallIco><T>선택 영역 반전</T></SmallBtn>
              </SmallCol>
            </GroupBody>
            <GroupLabel><T>선택</T></GroupLabel>
          </Group>
        </Ribbon>

        <AddressRow>
          <NavBtns>
            <NavBtn $w={39}><svg width="15" height="13" viewBox="0 0 15 13"><path d="M6.500 .5l-6 6 6 6M.5 6.500h14" fill="none" stroke="#555" strokeWidth="1.300" /></svg></NavBtn>
            <NavBtn $w={29}><svg width="15" height="13" viewBox="0 0 15 13"><path d="M8.500 .5l6 6-6 6M14.500 6.500H.5" fill="none" stroke="#c8c8c8" strokeWidth="1.300" /></svg></NavBtn>
            <NavBtn $w={26}><svg width="9" height="6" viewBox="0 0 9 6"><path d="M.5 .5l4 4 4-4" fill="none" stroke="#666" strokeWidth="1.200" /></svg></NavBtn>
            <NavBtn $w={20}><svg width="13" height="15" viewBox="0 0 13 15"><path d="M.5 6.500l6-6 6 6M6.500 .5v14" fill="none" stroke="#555" strokeWidth="1.300" /></svg></NavBtn>
          </NavBtns>
          <AddressBox>
            <Folder s={0.85} />
            <CrumbSep>«</CrumbSep>
            <Crumb>IFW_BR_SimpleM_Msgini_v3.0_BCD_2023-12-29_Fixed</Crumb>
            <CrumbSep>›</CrumbSep>
            <Crumb>Backup</Crumb>
            <CrumbSep>›</CrumbSep>
            <AddrRight>
              <ComboArrow><svg width="11" height="7" viewBox="0 0 11 7"><path d="M.5 .5l5 5 5-5" fill="none" stroke="#555" strokeWidth="1.300" /></svg></ComboArrow>
              <RefreshBox><svg width="15" height="16" viewBox="0 0 15 16"><path d="M9 2.500a6 6 0 1 1-5 .5M4.500 .5V4H1" fill="none" stroke="#666" strokeWidth="1.300" transform="matrix(-1 0 0 1 15 0)" /></svg></RefreshBox>
            </AddrRight>
          </AddressBox>
          <SearchBox>
            <SearchText><T>Backup 검색</T></SearchText>
            <svg width="14" height="15" viewBox="0 0 14 15"><circle cx="9" cy="5" r="4" fill="none" stroke="#555" strokeWidth="1.400" /><path d="M6 8l-5 6" stroke="#555" strokeWidth="1.800" /></svg>
          </SearchBox>
        </AddressRow>

        <Main>
          <NavPane>
            {navItems.map(n => (
              <NavRow key={n.t} $sub={n.sub} $sel={n.sel} $mt={n.mt}><NavIcoSlot>{n.i}</NavIcoSlot><NavText><T>{n.t}</T></NavText></NavRow>
            ))}
          </NavPane>
          <FileArea>
            <HeaderRow>
              <HeaderCell $pl={24}><T>이름</T><SortCaret><svg width="11" height="6" viewBox="0 0 11 6"><path d="M.5 5.500l5-5 5 5" fill="none" stroke="#999" /></svg></SortCaret></HeaderCell>
              <HeaderCell><T>수정한 날짜</T></HeaderCell>
              <HeaderCell><T>유형</T></HeaderCell>
              <HeaderCell><T>크기</T></HeaderCell>
            </HeaderRow>
            <Rows>
              {files.map(f => (
                <FileRow key={f.n} $sel={f.sel}>
                  <NameCell><NameIco $wide={f.wide}>{f.i}</NameIco><T>{f.n}</T></NameCell>
                  <Cell><T>{f.d}</T></Cell>
                  <Cell><T>{f.ty}</T></Cell>
                  <Cell $right>{f.sz}</Cell>
                </FileRow>
              ))}
            </Rows>
          </FileArea>
        </Main>

        <StatusBar>
          <span><T>6개 항목</T></span><StatusGap><T>1개 항목 선택함</T></StatusGap>
          <ViewBtns>
            <ViewBtn $on>
              <svg width="20" height="16" viewBox="0 0 20 16"><rect x=".5" y=".5" width="5" height="4" fill="#fff" stroke="#999" /><rect x=".5" y="6" width="5" height="4" fill="#c9a23a" stroke="#999" /><rect x=".5" y="11.500" width="5" height="4" fill="#c84a3a" stroke="#999" /><path d="M7 2.500h5M14 2.500h5M7 8h5M14 8h5M7 13.500h5M14 13.500h5" stroke="#777" /></svg>
            </ViewBtn>
            <ViewBtn><PicIco /></ViewBtn>
          </ViewBtns>
        </StatusBar>
      </Win>

      <Menu>
        {menuGroups.map((g, gi) => (
          <React.Fragment key={gi}>
            {gi > 0 && <MenuSep />}
            {g.map(it => (
              <MenuItem key={it.t} $hot={it.hot} $bold={it.bold}>
                <MenuIcon>{it.icon}</MenuIcon>
                <MenuLabel><T>{it.t}</T></MenuLabel>
                {it.arrow && <MenuArrow><Chev /></MenuArrow>}
              </MenuItem>
            ))}
          </React.Fragment>
        ))}
      </Menu>
      <Pointer><PointerIcon /></Pointer>

      <Taskbar>
        <TaskCell $w={60}><svg width="20" height="20" viewBox="0 0 20 20"><path d="M0 2.800l8.200-1.200v8H0zM9.200 1.400L20 0v9.600H9.200zM0 10.600h8.200v7.800L0 17.200zM9.200 10.600H20V20L9.200 18.600z" fill="#fff" /></svg></TaskCell>
        <TaskCell $w={60}><svg width="20" height="20" viewBox="0 0 20 20"><circle cx="12" cy="8" r="7" fill="none" stroke="#fff" strokeWidth="1.400" /><path d="M7 13l-6 6" stroke="#fff" strokeWidth="1.600" /></svg></TaskCell>
        <TaskCell $w={60}><svg width="20" height="20" viewBox="0 0 20 20"><path d="M1 5.500h13v9H1zM1 1h13M1 19h13M18 1v18" fill="none" stroke="#fff" strokeWidth="1.200" /></svg></TaskCell>
        <TaskCell $w={61} $ml={629}><ChromeIco /></TaskCell>
        <TaskCell $w={63}><EdgeIco /></TaskCell>
        <TaskCell $w={61} $on><ExplorerIco /></TaskCell>
        <TaskCell $w={62}><StoreIco /></TaskCell>
        <TaskCell $w={62}><MailIco /></TaskCell>
        <Tray>
          <TrayCell $w={70} $pr={24}><UtilsText>Utils</UtilsText><More>»</More></TrayCell>
          <TrayCell $w={50}>
            <svg width="32" height="22" viewBox="0 0 32 22"><path d="M8 21a6 6 0 0 1-1-12 9 9 0 0 1 16-3 7 7 0 0 1 2 15z" fill="#bcd7f2" /><path d="M3 17c6 3 20 3 26 0-1 3-3 4-5 4H8c-2 0-4-1-5-4z" fill="#8fb6e0" /></svg>
            <CloudBadge>1</CloudBadge>
          </TrayCell>
          <TrayCell $w={34}><svg width="17" height="10" viewBox="0 0 17 10"><path d="M.7 9.300L8.500 1.500l7.800 7.800" fill="none" stroke="#fff" strokeWidth="1.400" /></svg></TrayCell>
          <TrayCell $w={30}><svg width="20" height="14" viewBox="0 0 20 14"><rect x="6.500" y="3" width="13" height="9" fill="none" stroke="#fff" /><rect x="8" y="4.500" width="10" height="6" fill="#fff" /><path d="M1 1v3M4 1v3M0 4h5v2a2.500 2.500 0 0 1-2 2v5" fill="none" stroke="#fff" strokeWidth="1.200" /></svg></TrayCell>
          <TrayCell $w={30}><svg width="17" height="15" viewBox="0 0 17 15"><path d="M1 7a14 14 0 0 1 15-5M4 10a9 9 0 0 1 9-5M7 12a5 5 0 0 1 4-3" fill="none" stroke="#9dbce6" strokeWidth="1.200" /><rect x="10.500" y="11.500" width="2.500" height="2.500" fill="#fff" /></svg></TrayCell>
          <TrayCell $w={28}><svg width="20" height="16" viewBox="0 0 20 16"><path d="M1 5h3l5-4v14l-5-4H1z" fill="none" stroke="#fff" strokeWidth="1.100" /><path d="M12 5a4 4 0 0 1 0 6M15 3a7 7 0 0 1 0 10" fill="none" stroke="#fff" strokeWidth="1.100" /></svg></TrayCell>
          <TrayCell $w={28}><ImeA>A</ImeA></TrayCell>
          <TrayCell $w={94}><Clock><span>오전 10:14</span><span>2023-12-31</span></Clock></TrayCell>
          <TrayCell $w={59} $pr={10}>
            <svg width="20" height="20" viewBox="0 0 20 20"><path d="M0 0h20v15h-9l-4 4v-4H0z" fill="#fff" /><path d="M3 4h14M3 7.500h14M3 11h9" stroke="#4a6ea8" /></svg>
            <NotifBadge>1</NotifBadge>
          </TrayCell>
          <TrayEdge />
        </Tray>
      </Taskbar>
    </Desktop>
  );
}
